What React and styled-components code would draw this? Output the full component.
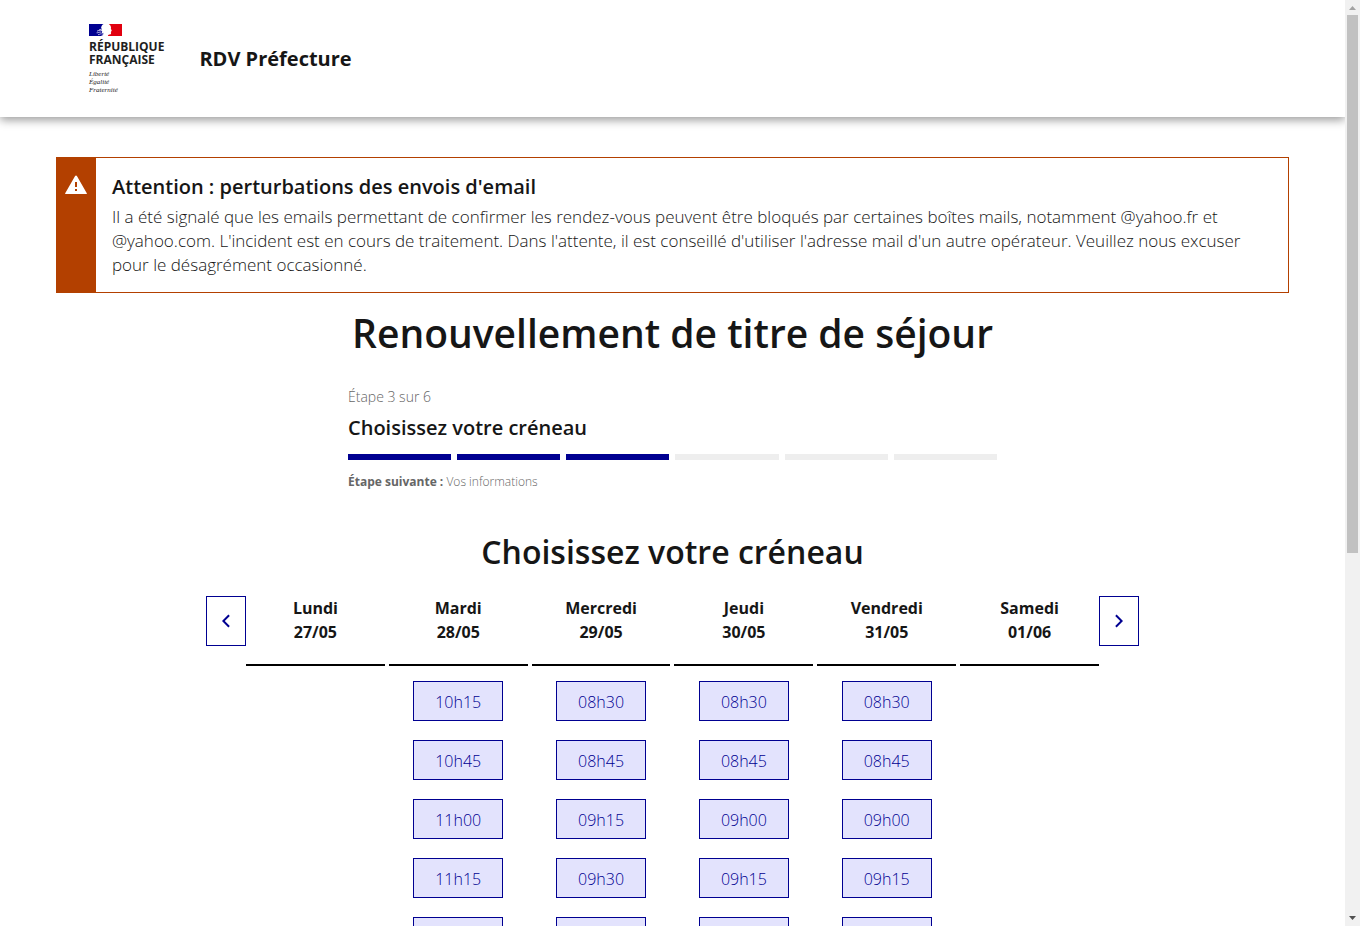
import React from 'react'
import styled, {createGlobalStyle} from 'styled-components'

const GlobalStyle = createGlobalStyle`
    * {
        box-sizing: border-box;
    }

    body {
        margin: 0;
        background: #fff;
        color: #161616;
        font-family: 'Open Sans', sans-serif;
        font-size: 16px;
        line-height: 24px;
    }
`

const Window = styled.div`
    height: 100vh;

    display: flex;
    overflow: hidden;
`

const Page = styled.div`
    flex: 1;
    min-width: 0;
    overflow: hidden;
`

const Scrollbar = styled.div`
    width: 15px;
    padding: 0 2px;

    display: flex;
    flex-direction: column;

    background: #f1f1f1;
`

const ScrollTrack = styled.div`
    flex: 1;
`

const ScrollThumb = styled.div`
    height: 60%;

    background: #c1c1c1;
`

const ScrollArrow = styled.svg`
    display: block;
    width: 11px;
    height: 15px;
`

const Header = styled.header`
    padding: 24px 89px;

    display: flex;
    align-items: center;
    gap: 35px;

    background: #fff;
    box-shadow: 0 3px 9px rgba(0, 0, 0, 0.4);
`

const Logo = styled.div`
    color: #1e1e1e;
`

const Flag = styled.svg`
    display: block;
    width: 33px;
    height: 12px;
    margin-bottom: 4px;
`

const LogoName = styled.p`
    margin: 0 0 4px;

    font-size: 12px;
    font-weight: 700;
    line-height: 13px;
`

const LogoMotto = styled.p`
    margin: 0 0 -1px;

    font-family: 'Liberation Serif', serif;
    font-size: 7px;
    font-style: italic;
    line-height: 8px;
`

const ServiceName = styled.p`
    margin: 0;

    font-size: 20px;
    font-weight: 700;
    line-height: 28px;
`

const Main = styled.main`
    padding: 40px 56px;
`

const Alert = styled.section`
    display: flex;

    border: 1px solid #b34000;
`

const AlertStrip = styled.div`
    width: 39px;
    padding: 15px 7px;

    background: #b34000;
`

const AlertIcon = styled.svg`
    display: block;
    width: 24px;
    height: 24px;
`

const AlertBody = styled.div`
    flex: 1;
    padding: 15px 16px;
`

const AlertTitle = styled.h3`
    margin: 0 0 4px;

    font-size: 20px;
    font-weight: 600;
    line-height: 28px;
`

const AlertText = styled.p`
    margin: 0;

    font-size: 17px;
    font-weight: 300;
`

const PageTitle = styled.h1`
    margin: 16px 0 28px;

    font-size: 39px;
    font-weight: 600;
    line-height: 48px;
    text-align: center;
`

const Stepper = styled.section`
    max-width: 649px;
    margin: 0 auto 40px;
`

const StepState = styled.p`
    margin: 0 0 5px;

    color: #666;
    font-size: 14px;
    font-weight: 300;
`

const StepTitle = styled.h2`
    margin: 0 0 12px;

    font-size: 20px;
    font-weight: 600;
    line-height: 28px;
`

const StepBars = styled.div`
    margin-bottom: 12px;

    display: grid;
    grid-template-columns: repeat(6, 1fr);
    gap: 6px;
`

const StepBar = styled.span`
    height: 6px;

    background: ${({$done}) => $done ? '#000091' : '#eee'};
`

const StepNext = styled.p`
    margin: 0;

    color: #666;
    font-size: 12px;
    font-weight: 300;
    line-height: 20px;

    strong {
        font-weight: 700;
    }
`

const SectionTitle = styled.h2`
    margin: 0 0 24px;

    font-size: 32px;
    font-weight: 600;
    line-height: 40px;
    text-align: center;
`

const Calendar = styled.div`
    max-width: 933px;
    margin: 0 auto;

    display: flex;
    align-items: flex-start;
`

const NavButton = styled.button`
    width: 40px;
    height: 50px;
    padding: 0;

    display: flex;
    align-items: center;
    justify-content: center;

    background: #fff;
    border: 1px solid #000091;
    color: #000091;
    cursor: pointer;
`

const Days = styled.div`
    flex: 1;

    display: grid;
    grid-template-columns: repeat(6, 1fr);
    gap: 4px;
`

const Day = styled.div`
    display: flex;
    flex-direction: column;
    align-items: center;
    gap: 19px;
`

const DayTitle = styled.h3`
    width: 100%;
    margin: 0 0 -4px;
    padding-bottom: 20px;

    display: flex;
    flex-direction: column;

    border-bottom: 2px solid #000;
    font-size: 16px;
    font-weight: 700;
    line-height: 24px;
    text-align: center;
`

const Slot = styled.button`
    width: 90px;
    height: 40px;
    padding: 2px 0 0;

    background: #e3e3fd;
    border: 1px solid #000091;
    color: #000091;
    cursor: pointer;
    font-family: inherit;
    font-size: 16px;
    font-weight: 300;
`

const days = [
    {name: 'Lundi', date: '27/05', slots: []},
    {name: 'Mardi', date: '28/05', slots: ['10h15', '10h45', '11h00', '11h15', '11h30']},
    {name: 'Mercredi', date: '29/05', slots: ['08h30', '08h45', '09h15', '09h30', '09h45']},
    {name: 'Jeudi', date: '30/05', slots: ['08h30', '08h45', '09h00', '09h15', '09h30']},
    {name: 'Vendredi', date: '31/05', slots: ['08h30', '08h45', '09h00', '09h15', '09h30']},
    {name: 'Samedi', date: '01/06', slots: []},
]

const Chevron = ({d}) => (
    <svg width="24" height="24" viewBox="0 0 24 24" fill="currentColor" aria-hidden="true">
        <path d={d}/>
    </svg>
)

const App = () => {
    return (
        <Window>
            <GlobalStyle/>
            <Page>
                <Header>
                    <Logo>
                        <Flag viewBox="1 0 33 12" aria-hidden="true">
                            <path fill="#000091" d="M1 0h14.6c-.9.5-1.6 1.1-2 2l-.5 1.8.7 1.2-.5 1.6.9.9-.5 1.5.6 1.1-1.1 1.9H1z"/>
                            <path fill="#e1000f" d="M20.8 0H34v12H19.9c.1-.9.5-1.4 1.5-1.5l1.4-.3.3-1-.3-.7.5-.6-.2-.8.8-.5-1-1.7.1-1.7c-.3-1.4-1-2.4-2.2-3.2z"/>
                            <path
                                fill="none"
                                stroke="#fff"
                                strokeWidth=".7"
                                d="M9 7.2c1.4-.9 2.8-.8 4.8-.9M8.6 8.8c1.5.2 2.4-.9 4.8-.8M10 10.6c1.3.2 2-.9 4-.8M11 5.9l2.6-.8"
                            />
                            <path fill="#000091" fillOpacity=".6" d="M13.4 9.6l2.2-.9-.6 2.6-2 .7z"/>
                        </Flag>
                        <LogoName>RÉPUBLIQUE<br/>FRANÇAISE</LogoName>
                        <LogoMotto>Liberté<br/>Égalité<br/>Fraternité</LogoMotto>
                    </Logo>
                    <ServiceName>RDV Préfecture</ServiceName>
                </Header>
                <Main>
                    <Alert>
                        <AlertStrip>
                            <AlertIcon viewBox="0 0 24 24" fill="#fff" aria-hidden="true">
                                <path d="M12.9 3l9.9 17.2a.5.5 0 0 1-.4.8H1.6a.5.5 0 0 1-.4-.8L11.1 3a1 1 0 0 1 1.8 0zM11 16v2h2v-2h-2zm0-7v5h2V9h-2z"/>
                            </AlertIcon>
                        </AlertStrip>
                        <AlertBody>
                            <AlertTitle>Attention : perturbations des envois d'email</AlertTitle>
                            <AlertText>
                                Il a été signalé que les emails permettant de confirmer les rendez-vous peuvent être bloqués par certaines boîtes mails, notamment @yahoo.fr et @yahoo.com. L'incident est en cours de traitement. Dans l'attente, il est conseillé d'utiliser l'adresse mail d'un autre opérateur. Veuillez nous excuser pour le désagrément occasionné.
                            </AlertText>
                        </AlertBody>
                    </Alert>
                    <PageTitle>Renouvellement de titre de séjour</PageTitle>
                    <Stepper>
                        <StepState>Étape 3 sur 6</StepState>
                        <StepTitle>Choisissez votre créneau</StepTitle>
                        <StepBars>
                            {[1, 2, 3, 4, 5, 6].map((step) => (
                                <StepBar key={step} $done={step <= 3}/>
                            ))}
                        </StepBars>
                        <StepNext><strong>Étape suivante :</strong> Vos informations</StepNext>
                    </Stepper>
                    <SectionTitle>Choisissez votre créneau</SectionTitle>
                    <Calendar>
                        <NavButton aria-label="Semaine précédente">
                            <Chevron d="M10.8 12l5 5-1.4 1.4L8 12l6.4-6.4L15.8 7z"/>
                        </NavButton>
                        <Days>
                            {days.map(({name, date, slots}) => (
                                <Day key={date}>
                                    <DayTitle>
                                        <span>{name}</span>
                                        <span>{date}</span>
                                    </DayTitle>
                                    {slots.map((slot) => (
                                        <Slot key={slot}>{slot}</Slot>
                                    ))}
                                </Day>
                            ))}
                        </Days>
                        <NavButton aria-label="Semaine suivante">
                            <Chevron d="M13.2 12l-5-5 1.4-1.4L16 12l-6.4 6.4L8.2 17z"/>
                        </NavButton>
                    </Calendar>
                </Main>
            </Page>
            <Scrollbar aria-hidden="true">
                <ScrollArrow viewBox="0 0 11 15">
                    <path fill="#a3a3a3" d="M5.5 6L9 10H2z"/>
                </ScrollArrow>
                <ScrollTrack>
                    <ScrollThumb/>
                </ScrollTrack>
                <ScrollArrow viewBox="0 0 11 15">
                    <path fill="#505050" d="M2 5h7L5.5 9z"/>
                </ScrollArrow>
            </Scrollbar>
        </Window>
    )
}

export default App
